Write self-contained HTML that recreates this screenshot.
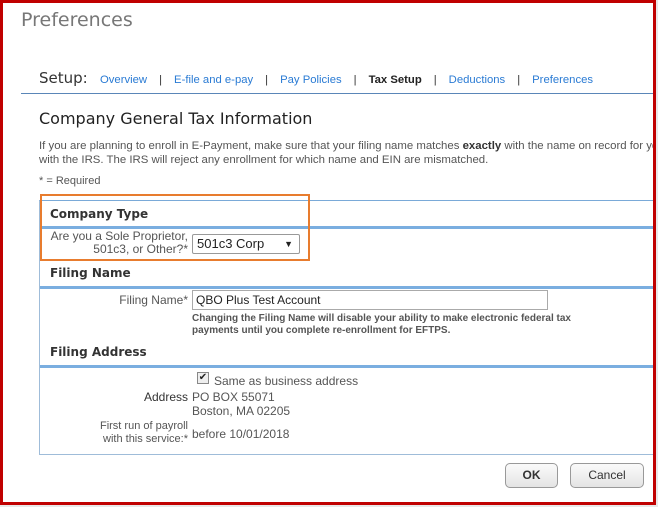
<!DOCTYPE html>
<html><head><style>
body{margin:0;width:658px;height:507px;background:#e8e8e8;position:relative;overflow:hidden;font-family:"Liberation Sans",sans-serif;}
.frame{position:absolute;left:0;top:0;width:650px;height:499px;border:3px solid #c00000;background:#fff;overflow:hidden}
.a{position:absolute;white-space:nowrap}
.lnk{color:#2a7bd4}
.sep{color:#333;margin:0 12px}
.hd{font-family:"DejaVu Sans",sans-serif;font-weight:bold;font-size:12px;color:#333}
.g{color:#555;font-size:12px}
.btn{position:absolute;border:1px solid #999;border-radius:5px;background:linear-gradient(#fafafa,#e4e4e4);font-size:12px;font-weight:bold;color:#333;text-align:center;line-height:22px}
</style></head><body>
<div class="frame">
<div class="a" style="left:18px;top:6px;font-family:'DejaVu Sans',sans-serif;font-size:19px;color:#777;">Preferences</div>
<div class="a" style="left:36px;top:66px;font-family:'DejaVu Sans',sans-serif;font-size:15px;color:#333">Setup:</div>
<div class="a" style="left:97px;top:71px;font-size:11.3px">
<span class="lnk">Overview</span><span class="sep">|</span><span class="lnk">E-file and e-pay</span><span class="sep">|</span><span class="lnk">Pay Policies</span><span class="sep">|</span><b style="color:#222">Tax Setup</b><span class="sep">|</span><span class="lnk">Deductions</span><span class="sep">|</span><span class="lnk">Preferences</span></div>
<div class="a" style="left:18px;top:90px;width:640px;height:1px;background:#5a86b8"></div>
<div class="a" style="left:36px;top:106px;font-family:'DejaVu Sans',sans-serif;font-size:16px;color:#222">Company General Tax Information</div>
<div class="a g" style="left:36px;top:136px;font-size:11.4px;line-height:14px">If you are planning to enroll in E-Payment, make sure that your filing name matches <b style="color:#333">exactly</b> with the name on record for you<br>with the IRS. The IRS will reject any enrollment for which name and EIN are mismatched.</div>
<div class="a g" style="left:36px;top:172px;font-size:11px">* = Required</div>
<div class="a" style="left:36px;top:197px;width:620px;height:253px;border-left:1px solid #9fbcd9;border-bottom:1px solid #9fbcd9;border-top:1px solid #7aaad8"></div>
<div class="a hd" style="left:47px;top:204px">Company Type</div>
<div class="a" style="left:37px;top:223px;width:620px;height:3px;background:#7aaee0"></div>
<div class="a g" style="left:40px;top:227px;width:145px;text-align:right;line-height:13px">Are you a Sole Proprietor,<br>501c3, or Other?*</div>
<div class="a" style="left:189px;top:231px;font-size:13px;color:#222;line-height:18px;padding-left:4px;box-sizing:border-box;width:108px;height:20px;border:1px solid #999;border-radius:2px">501c3 Corp<span style="position:absolute;right:6px;top:0;font-size:9px">▼</span></div>
<div class="a" style="left:37px;top:191px;width:266px;height:63px;border:2px solid #e87c2e"></div>
<div class="a hd" style="left:47px;top:263px">Filing Name</div>
<div class="a" style="left:37px;top:283px;width:620px;height:3px;background:#7aaee0"></div>
<div class="a g" style="left:60px;top:290px;width:125px;text-align:right">Filing Name*</div>
<div class="a" style="left:189px;top:287px;width:356px;height:20px;border:1px solid #aaa;box-sizing:border-box;font-size:12px;color:#222;line-height:18px;padding-left:3px">QBO Plus Test Account</div>
<div class="a" style="left:189px;top:310px;font-size:10px;font-weight:bold;color:#555;line-height:12px">Changing the Filing Name will disable your ability to make electronic federal tax<br>payments until you complete re-enrollment for EFTPS.</div>
<div class="a hd" style="left:47px;top:342px">Filing Address</div>
<div class="a" style="left:37px;top:362px;width:620px;height:3px;background:#7aaee0"></div>
<div class="a" style="left:194px;top:369px;width:10px;height:10px;border:1px solid #888;background:#eee;font-size:10px;line-height:10px;text-align:center;color:#222">✔</div>
<div class="a g" style="left:211px;top:371px">Same as business address</div>
<div class="a" style="left:60px;top:387px;width:125px;text-align:right;font-size:12px;color:#333">Address</div>
<div class="a g" style="left:189px;top:387px;line-height:14px">PO BOX 55071<br>Boston, MA 02205</div>
<div class="a g" style="left:40px;top:417px;width:145px;text-align:right;line-height:13px;font-size:11px">First run of payroll<br>with this service:*</div>
<div class="a g" style="left:189px;top:424px">before 10/01/2018</div>
<div class="btn" style="left:502px;top:460px;width:51px;height:23px">OK</div>
<div class="btn" style="left:567px;top:460px;width:72px;height:23px;font-weight:normal">Cancel</div>
</div>
</body></html>
